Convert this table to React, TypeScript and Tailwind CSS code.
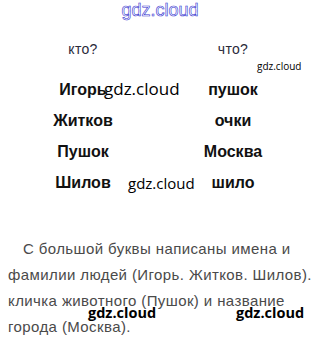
const arial = { fontFamily: '"Liberation Sans", Arial, sans-serif' };
const mark = { fontFamily: '"Open Sans", "Liberation Sans", sans-serif' };

const rows: [string, string][] = [
  ['Игорь', 'пушок'],
  ['Житков', 'очки'],
  ['Пушок', 'Москва'],
  ['Шилов', 'шило'],
];

function Mark({ className }: { className: string }) {
  return (
    <span className={`absolute whitespace-nowrap text-black ${className}`} style={mark}>
      gdz.cloud
    </span>
  );
}

export default function App() {
  return (
    <div className="relative h-[349px] w-[320px] overflow-hidden bg-white" style={arial}>
      <div className="flex h-[20px] justify-center">
        <span className="text-[18px] leading-[20px] text-white [-webkit-text-stroke:0.6px_#3535d0]">
          gdz.cloud
        </span>
      </div>

      <div className="mt-[19px] grid grid-cols-[150px_150px] pl-[8px] text-[14px] leading-[20px] tracking-[0.3px] text-[#2a2a3a]">
        <span className="text-center">кто?</span>
        <span className="text-center">что?</span>
      </div>

      <div className="mt-[15px] flex flex-col pl-[8px]">
        {rows.map(([a, b]) => (
          <div key={a} className="grid h-[31px] grid-cols-[150px_150px] text-[16px] font-bold leading-[31px] text-[#111]">
            <span className="text-center">{a}</span>
            <span className="text-center">{b}</span>
          </div>
        ))}
      </div>

      <p className="mt-[38px] whitespace-nowrap pl-[8px] text-[15px] leading-[26px] tracking-[0.4px] text-[#4a4a4a]">
        <span className="pl-[15px]">С большой буквы написаны имена и</span>
        <br />
        фамилии людей (Игорь. Житков. Шилов).
        <br />
        кличка животного (Пушок) и название
        <br />
        города (Москва).
      </p>

      <Mark className="left-[257px] top-[58px] text-[10px] leading-[16px]" />
      <Mark className="left-[104px] top-[78px] text-[17px] leading-[22px]" />
      <Mark className="left-[128px] top-[172px] text-[15px] leading-[22px]" />
      <Mark className="left-[88px] top-[302px] text-[14.5px] font-bold leading-[22px]" />
      <Mark className="left-[236px] top-[302px] text-[14.5px] font-bold leading-[22px]" />
    </div>
  );
}
